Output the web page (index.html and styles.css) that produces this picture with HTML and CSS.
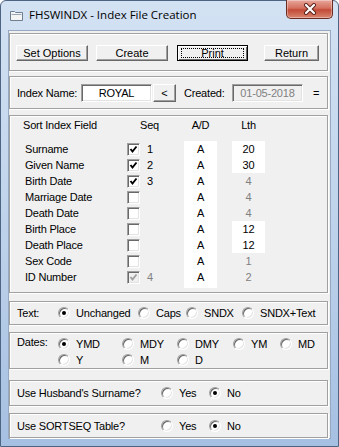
FILE: index.html
```html
<!DOCTYPE html>
<html lang="en">
<head>
    <meta charset="UTF-8">
    <title>FHSWINDX - Index File Creation</title>
    <link rel="stylesheet" href="styles.css">
</head>
<body>
<div class="window">
    <div class="titlebar">
        <svg class="app-icon" width="13" height="11" viewBox="0 0 13 11">
            <path d="M0.5 1.5 H4.5 L5.5 2.5 H12.5 V10.5 H0.5 Z" fill="#f4f4f4" stroke="#6f7f8f"/>
            <path d="M1.5 4.5 H11.5" stroke="#9aa8b6"/>
        </svg>
        <span class="title">FHSWINDX - Index File Creation</span>
        <div class="close-btn">
            <svg width="14" height="12" viewBox="0 0 14 12">
                <path d="M3 2 L11 10 M11 2 L3 10" stroke="#5a1e18" stroke-width="4" stroke-linecap="round"/>
                <path d="M3 2 L11 10 M11 2 L3 10" stroke="#fff" stroke-width="2.2" stroke-linecap="round"/>
            </svg>
        </div>
    </div>

    <div class="client">
        <!-- command buttons -->
        <div class="panel panel-buttons">
            <button class="btn btn-set">Set Options</button>
            <button class="btn btn-create">Create</button>
            <button class="btn btn-print default"><span class="focus">Print</span></button>
            <button class="btn btn-return">Return</button>
        </div>

        <!-- index name -->
        <div class="panel panel-name">
            <span class="name-label">Index Name:</span>
            <div class="edit name-edit">ROYAL</div>
            <button class="btn btn-small">&lt;</button>
            <span class="created-label">Created:</span>
            <div class="edit date-edit">01-05-2018</div>
            <span class="equals">=</span>
        </div>

        <!-- sort fields -->
        <div class="panel panel-sort">
            <div class="sort-grid">
                <div class="hd hd-field">Sort Index Field</div>
                <div class="hd hd-seq">Seq</div>
                <div class="hd hd-ad">A/D</div>
                <div class="hd hd-lth">Lth</div>

                <div class="fld" style="grid-row:2">Surname</div>
                <div class="fld" style="grid-row:3">Given Name</div>
                <div class="fld" style="grid-row:4">Birth Date</div>
                <div class="fld" style="grid-row:5">Marriage Date</div>
                <div class="fld" style="grid-row:6">Death Date</div>
                <div class="fld" style="grid-row:7">Birth Place</div>
                <div class="fld" style="grid-row:8">Death Place</div>
                <div class="fld" style="grid-row:9">Sex Code</div>
                <div class="fld" style="grid-row:10">ID Number</div>

                <div class="chk-cell" style="grid-row:2"><span class="chk on"></span></div>
                <div class="chk-cell" style="grid-row:3"><span class="chk on"></span></div>
                <div class="chk-cell" style="grid-row:4"><span class="chk on"></span></div>
                <div class="chk-cell" style="grid-row:5"><span class="chk"></span></div>
                <div class="chk-cell" style="grid-row:6"><span class="chk"></span></div>
                <div class="chk-cell" style="grid-row:7"><span class="chk"></span></div>
                <div class="chk-cell" style="grid-row:8"><span class="chk"></span></div>
                <div class="chk-cell" style="grid-row:9"><span class="chk"></span></div>
                <div class="chk-cell" style="grid-row:10"><span class="chk on disabled"></span></div>

                <div class="seq" style="grid-row:2">1</div>
                <div class="seq" style="grid-row:3">2</div>
                <div class="seq" style="grid-row:4">3</div>
                <div class="seq gray" style="grid-row:10">4</div>

                <div class="ad-list">
                    <div>A</div><div>A</div><div>A</div><div>A</div><div>A</div>
                    <div>A</div><div>A</div><div>A</div><div>A</div>
                </div>

                <div class="lth-box" style="grid-row:2 / span 2"><div>20</div><div>30</div></div>
                <div class="lth gray" style="grid-row:4">4</div>
                <div class="lth gray" style="grid-row:5">4</div>
                <div class="lth gray" style="grid-row:6">4</div>
                <div class="lth-box" style="grid-row:7 / span 2"><div>12</div><div>12</div></div>
                <div class="lth gray" style="grid-row:9">1</div>
                <div class="lth gray" style="grid-row:10">2</div>
            </div>
        </div>

        <!-- text option -->
        <div class="panel panel-text">
            <span class="opt-label">Text:</span>
            <label class="opt w-unch"><span class="radio on"></span>Unchanged</label>
            <label class="opt w-caps"><span class="radio"></span>Caps</label>
            <label class="opt w-sndx"><span class="radio"></span>SNDX</label>
            <label class="opt"><span class="radio"></span>SNDX+Text</label>
        </div>

        <!-- dates option -->
        <div class="panel panel-dates">
            <span class="opt-label">Dates:</span>
            <div class="dates-grid">
                <label class="opt"><span class="radio on"></span>YMD</label>
                <label class="opt"><span class="radio"></span>MDY</label>
                <label class="opt"><span class="radio"></span>DMY</label>
                <label class="opt"><span class="radio"></span>YM</label>
                <label class="opt"><span class="radio"></span>MD</label>
                <label class="opt"><span class="radio"></span>Y</label>
                <label class="opt"><span class="radio"></span>M</label>
                <label class="opt"><span class="radio"></span>D</label>
            </div>
        </div>

        <div class="panel panel-yn panel-husband">
            <span class="yn-label">Use Husband's Surname?</span>
            <label class="opt w-yes"><span class="radio"></span>Yes</label>
            <label class="opt"><span class="radio on"></span>No</label>
        </div>

        <div class="panel panel-yn panel-sortseq">
            <span class="yn-label">Use SORTSEQ Table?</span>
            <label class="opt w-yes"><span class="radio"></span>Yes</label>
            <label class="opt"><span class="radio on"></span>No</label>
        </div>
    </div>
</div>
</body>
</html>
```

FILE: styles.css
```css
* {
    box-sizing: border-box;
}

body {
    margin: 0;
    background: #fff;
    font-family: "Liberation Sans", Arial, sans-serif;
    font-size: 11px;
    letter-spacing: -0.2px;
    color: #000;
}

/* window frame */
.window {
    width: 339px;
    height: 447px;
    border: 1px solid #4d6482;
    border-radius: 6px 6px 0 0;
    background: linear-gradient(to bottom, #d3e2f3, #bcd1ea 55%, #a6c0e2);
    display: flex;
    flex-direction: column;
}

.titlebar {
    height: 29px;
    display: flex;
    align-items: flex-start;
    padding-left: 9px;
}

.app-icon {
    margin-top: 9px;
    margin-right: 6px;
}

.title {
    margin-top: 6px;
    font-family: "Open Sans", "Noto Sans", sans-serif;
    font-size: 11.5px;
    letter-spacing: 0;
}

.close-btn {
    margin-left: auto;
    margin-right: 5px;
    margin-top: -1px;
    width: 47px;
    height: 19px;
    border: 1px solid #6b2a22;
    border-top: none;
    border-radius: 0 0 5px 5px;
    background: linear-gradient(to bottom, #e8a79b, #d4705f 45%, #c24a36 55%, #d98670);
    box-shadow: inset 0 0 0 1px rgba(255, 255, 255, 0.35);
    display: flex;
    align-items: center;
    justify-content: center;
}

.client {
    flex: 1;
    margin: 0 7px 7px;
    background: #f0f0f0;
    border: 1px solid #97a9c0;
    padding-top: 2px;
}

/* etched group boxes */
.panel {
    border: 1px solid #a0a0a0;
    box-shadow: inset 1px 1px 0 #fff, 1px 1px 0 #fff;
    margin: 0 2px 0 0;
    display: flex;
    align-items: center;
}

.panel-buttons {
    height: 38px;
    padding: 1px 8px 0 6px;
    gap: 8px;
}

.panel-name {
    height: 33px;
    margin-top: 5px;
    padding-left: 7px;
}

.panel-sort {
    height: 178px;
    margin-top: 6px;
    align-items: flex-start;
    padding: 1px 0 0 13px;
}

.panel-text {
    height: 24px;
    margin-top: 8px;
    padding-left: 7px;
}

.panel-dates {
    height: 37px;
    margin-top: 7px;
    padding-left: 7px;
    align-items: flex-start;
    padding-top: 3px;
}

.panel-husband {
    height: 26px;
    margin-top: 11px;
}

.panel-sortseq {
    height: 25px;
    margin-top: 7px;
}

/* buttons */
.btn {
    height: 16px;
    padding: 0;
    font: inherit;
    color: #000;
    background: #f0f0f0;
    border: 1px solid;
    border-color: #fff #696969 #696969 #fff;
    box-shadow: inset -1px -1px 0 #a0a0a0;
    display: flex;
    align-items: center;
    justify-content: center;
}

.btn-set,
.btn-create {
    width: 72px;
}

.btn-print {
    width: 71px;
    margin-left: 1px;
}

.btn-return {
    width: 55px;
    margin-left: auto;
}

.btn.default {
    border: 1px solid #000;
    box-shadow: inset 1px 1px 0 #fff, inset -1px -1px 0 #696969;
}

.focus {
    display: block;
    width: 63px;
    height: 10px;
    line-height: 9px;
    border: 1px dotted #000;
    text-align: center;
}

.btn-small {
    width: 23px;
    height: 18px;
    margin-left: 1px;
}

/* edits */
.edit {
    height: 18px;
    width: 71px;
    background: #fff;
    border: 1px solid;
    border-color: #a0a0a0 #fff #fff #a0a0a0;
    box-shadow: inset 1px 1px 0 #696969, inset -1px -1px 0 #e3e3e3;
    display: flex;
    align-items: center;
    justify-content: center;
}

.name-label {
    width: 64px;
}

.created-label {
    width: 48px;
    margin-left: 8px;
}

.date-edit {
    background: #f0f0f0;
    color: #808080;
}

.equals {
    margin-left: 10px;
}

/* sort field table */
.sort-grid {
    display: grid;
    grid-template-columns: 104px 13px 44px 33px 15px 33px;
    grid-template-rows: 24px repeat(9, 16px);
    line-height: 16px;
}

.hd {
    grid-row: 1;
    align-self: start;
}

.hd-field {
    grid-column: 1;
}

.hd-seq {
    grid-column: 3;
}

.hd-ad {
    grid-column: 4;
    text-align: center;
}

.hd-lth {
    grid-column: 6;
    text-align: center;
}

.fld {
    grid-column: 1;
    padding-left: 2px;
}

.chk-cell {
    grid-column: 2;
    display: flex;
    align-items: center;
}

.chk {
    width: 13px;
    height: 13px;
    background: #fff;
    border: 1px solid;
    border-color: #a0a0a0 #fff #fff #a0a0a0;
    box-shadow: inset 1px 1px 0 #696969, inset -1px -1px 0 #e3e3e3;
}

.chk.on {
    background: #fff url("data:image/svg+xml,%3Csvg xmlns='http://www.w3.org/2000/svg' width='11' height='11'%3E%3Cpath d='M2.5 5 L4.5 7.5 L8.5 2.5' fill='none' stroke='%23000' stroke-width='1.9'/%3E%3C/svg%3E") center / 11px 11px no-repeat;
}

.chk.on.disabled {
    background: #f0f0f0 url("data:image/svg+xml,%3Csvg xmlns='http://www.w3.org/2000/svg' width='11' height='11'%3E%3Cpath d='M2.5 5 L4.5 7.5 L8.5 2.5' fill='none' stroke='%23a0a0a0' stroke-width='1.9'/%3E%3C/svg%3E") center / 11px 11px no-repeat;
}

.seq {
    grid-column: 3;
    padding-left: 7px;
}

.gray {
    color: #808080;
}

.ad-list {
    grid-column: 4;
    grid-row: 2 / span 9;
    align-self: start;
    background: #fff;
    text-align: center;
    padding-bottom: 3px;
}

.lth-box {
    grid-column: 6;
    background: #fff;
    text-align: center;
}

.lth {
    grid-column: 6;
    text-align: center;
}

/* option rows */
.opt-label {
    width: 41px;
    flex-shrink: 0;
}

.opt {
    display: flex;
    align-items: center;
    gap: 6px;
    line-height: 16px;
}

.w-unch {
    width: 80px;
}

.w-caps {
    width: 48px;
}

.w-sndx {
    width: 56px;
}

.dates-grid {
    display: grid;
    grid-template-columns: 64px 55px 56px 47px auto;
}

.radio {
    width: 12px;
    height: 12px;
    border-radius: 50%;
    background: #fff;
    border: 1px solid;
    border-color: #a0a0a0 #fff #fff #a0a0a0;
    box-shadow: inset 1px 1px 0 #696969, inset -1px -1px 0 #e3e3e3;
    display: flex;
    align-items: center;
    justify-content: center;
    flex-shrink: 0;
}

.radio.on::after {
    content: "";
    width: 4px;
    height: 4px;
    border-radius: 50%;
    background: #000;
}

.panel-yn {
    padding-left: 7px;
}

.yn-label {
    width: 144px;
}

.w-yes {
    width: 48px;
}
```
